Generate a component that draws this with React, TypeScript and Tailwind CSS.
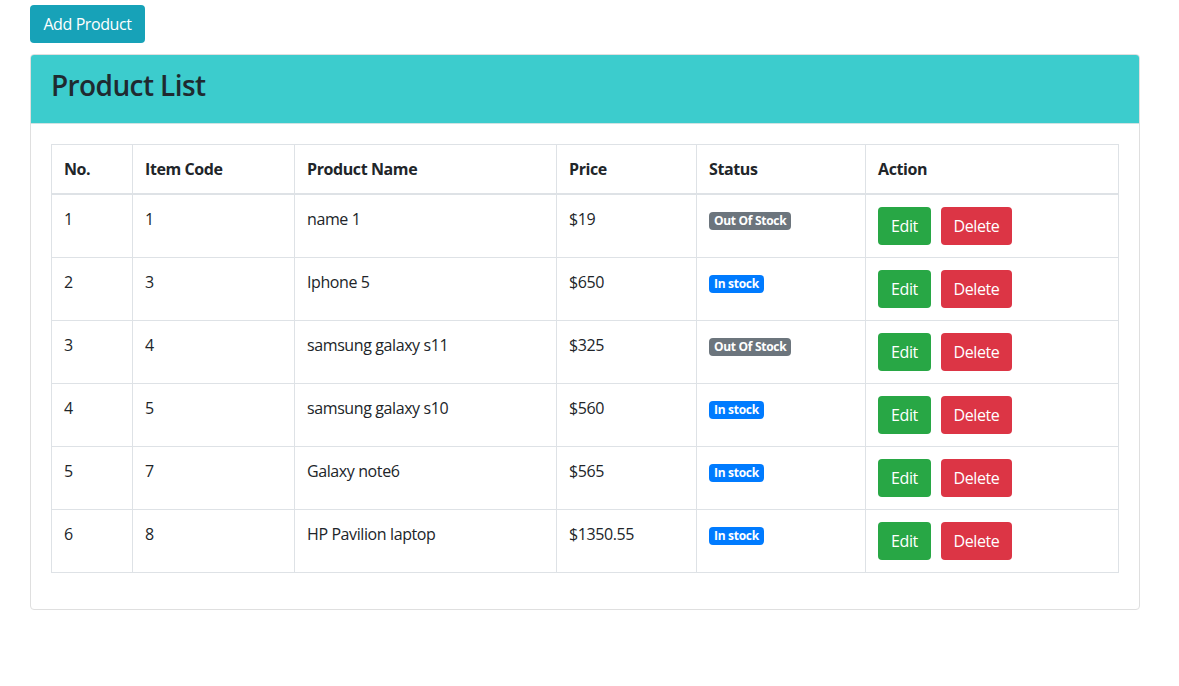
import React from "react";

type Row = { no: number; code: number; name: string; price: string; inStock: boolean };

const rows: Row[] = [
  { no: 1, code: 1, name: "name 1", price: "$19", inStock: false },
  { no: 2, code: 3, name: "Iphone 5", price: "$650", inStock: true },
  { no: 3, code: 4, name: "samsung galaxy s11", price: "$325", inStock: false },
  { no: 4, code: 5, name: "samsung galaxy s10", price: "$560", inStock: true },
  { no: 5, code: 7, name: "Galaxy note6", price: "$565", inStock: true },
  { no: 6, code: 8, name: "HP Pavilion laptop", price: "$1350.55", inStock: true },
];

export default function App() {
  return (
    <div
      className="min-h-[686px] bg-white text-[#212529] text-[16px] leading-[24px] tracking-[-0.4px]"
      style={{ fontFamily: '"Open Sans", "Noto Sans", sans-serif' }}
    >
      <div className="w-[1110px] ml-[30px]">
        <div className="flex pt-[5px] pb-[11px]">
          <button className="h-[38px] w-[115px] rounded-[4px] bg-[#17a2b8] text-white text-[16px] leading-[24px]">
            Add Product
          </button>
        </div>
        <div className="border border-[#dfdfdf] rounded-[4px]">
          <div className="h-[69px] bg-[#3ccccd] px-[20px] pt-[12px] border-b border-[#cfe3e3] rounded-t-[3px]">
            <h2 className="text-[28px] leading-[36px] font-semibold text-[#1f2a30] tracking-[-0.6px]">Product List</h2>
          </div>
          <div className="p-[20px]">
            <table className="w-[1067px] border-collapse table-fixed mb-[16px]">
              <colgroup>
                <col className="w-[81px]" />
                <col className="w-[162px]" />
                <col className="w-[262px]" />
                <col className="w-[140px]" />
                <col className="w-[169px]" />
                <col className="w-[253px]" />
              </colgroup>
              <thead>
                <tr>
                  {["No.", "Item Code", "Product Name", "Price", "Status", "Action"].map((h) => (
                    <th
                      key={h}
                      className="text-left font-bold border border-[#dee2e6] border-b-2 px-[12px] py-[12px] h-[49px] align-bottom"
                    >
                      {h}
                    </th>
                  ))}
                </tr>
              </thead>
              <tbody>
                {rows.map((r) => (
                  <tr key={r.no}>
                    <td className="border border-[#dee2e6] px-[12px] py-[12px] align-top h-[63px]">{r.no}</td>
                    <td className="border border-[#dee2e6] px-[12px] py-[12px] align-top">{r.code}</td>
                    <td className="border border-[#dee2e6] px-[12px] py-[12px] align-top">{r.name}</td>
                    <td className="border border-[#dee2e6] px-[12px] py-[12px] align-top">{r.price}</td>
                    <td className="border border-[#dee2e6] px-[12px] py-[12px] align-top">
                      <span
                        className={
                          r.inStock
                            ? "inline-block mt-[5px] bg-[#007bff] text-white text-[12px] leading-[12px] font-bold px-[5px] py-[3px] rounded-[4px] align-top tracking-[-0.3px]"
                            : "inline-block mt-[5px] bg-[#6c757d] text-white text-[12px] leading-[12px] font-bold px-[5px] py-[3px] rounded-[4px] align-top tracking-[-0.3px]"
                        }
                      >
                        {r.inStock ? "In stock" : "Out Of Stock"}
                      </span>
                    </td>
                    <td className="border border-[#dee2e6] px-[12px] py-[12px] align-top">
                      <div className="flex gap-[10px]">
                        <button className="h-[38px] w-[53px] rounded-[4px] bg-[#28a745] text-white text-[16px]">Edit</button>
                        <button className="h-[38px] w-[71px] rounded-[4px] bg-[#dc3545] text-white text-[16px]">Delete</button>
                      </div>
                    </td>
                  </tr>
                ))}
              </tbody>
            </table>
          </div>
        </div>
      </div>
    </div>
  );
}
